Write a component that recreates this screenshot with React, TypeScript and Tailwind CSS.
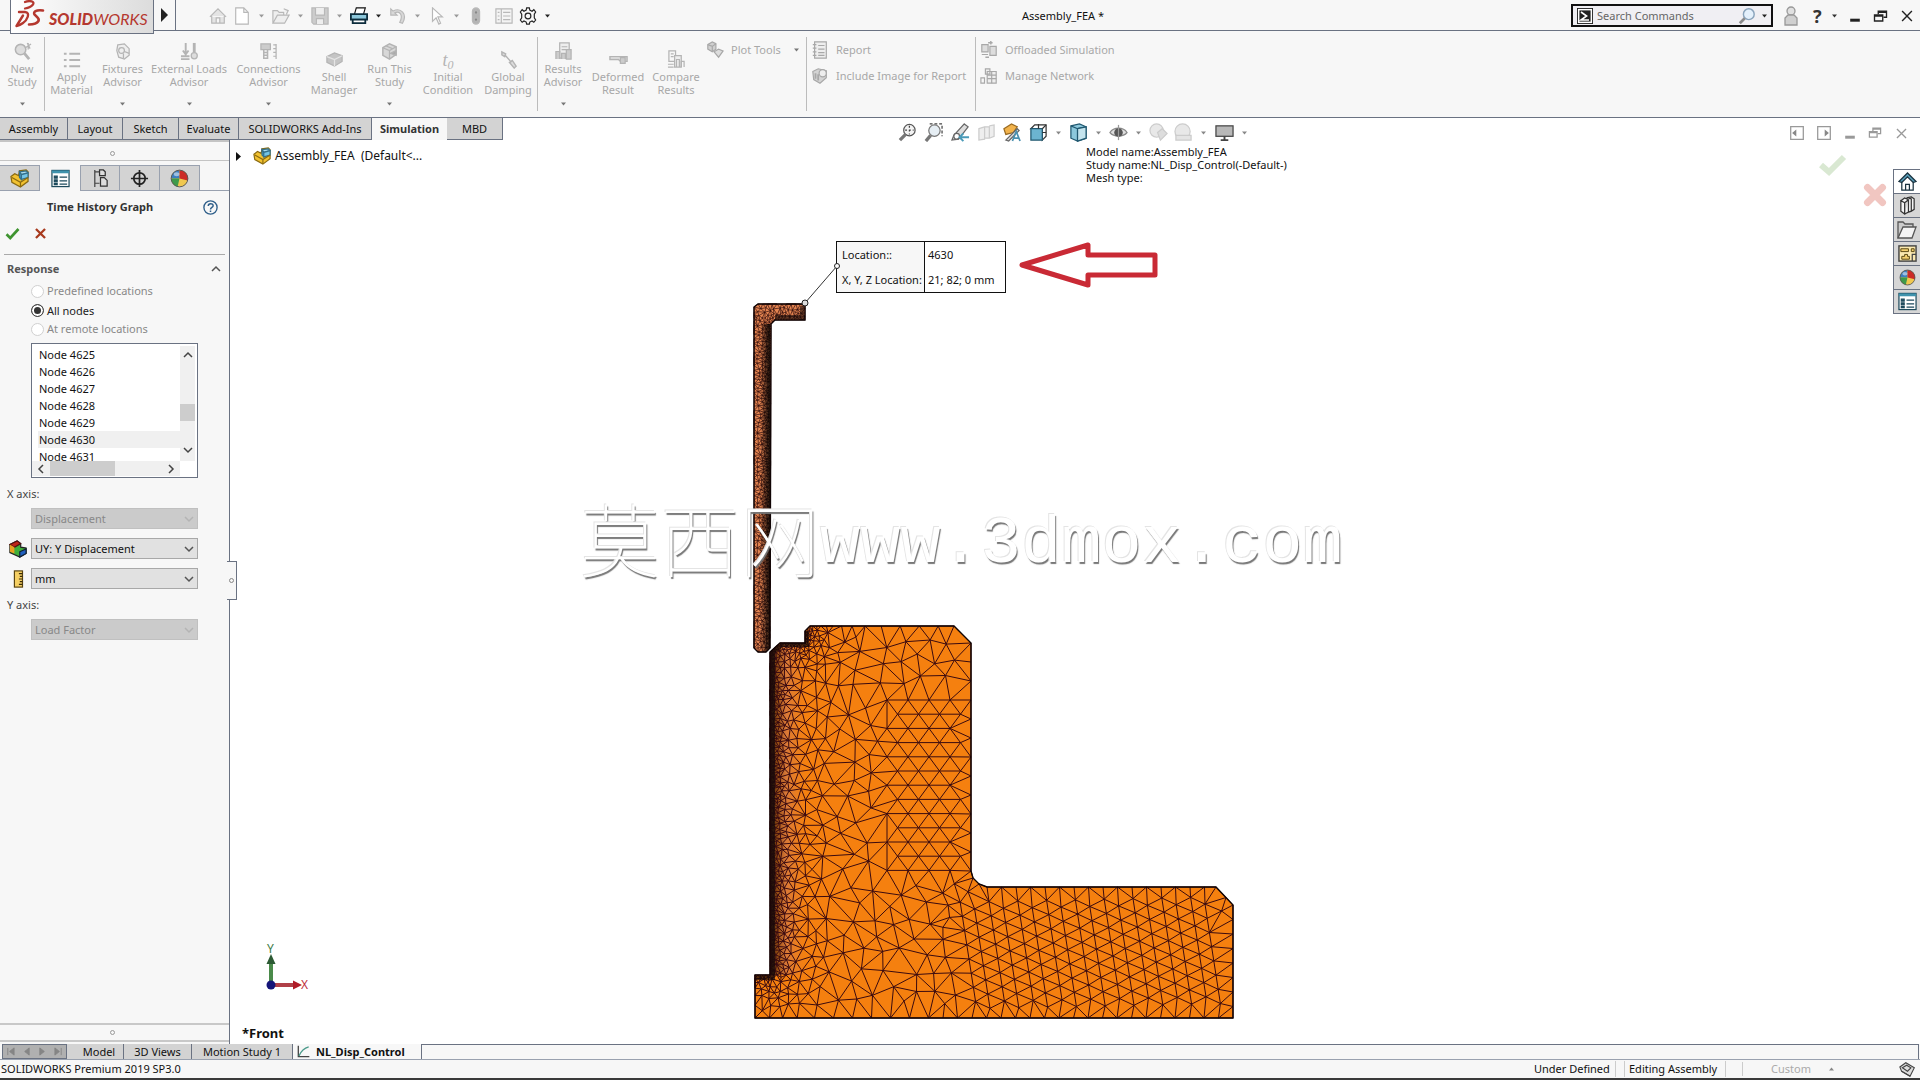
import React, { useMemo } from "react";

type Pt = [number, number];

/* ---------- finite element mesh ---------- */

function insidePoly(x: number, y: number, poly: Pt[]) {
  let hit = false;
  for (let i = 0, j = poly.length - 1; i < poly.length; j = i++) {
    const [xi, yi] = poly[i];
    const [xj, yj] = poly[j];
    if (yi > y !== yj > y && x < ((xj - xi) * (y - yi)) / (yj - yi) + xi) hit = !hit;
  }
  return hit;
}

function segDist(x: number, y: number, a: Pt, b: Pt) {
  const dx = b[0] - a[0];
  const dy = b[1] - a[1];
  const l = dx * dx + dy * dy;
  const t = l ? Math.max(0, Math.min(1, ((x - a[0]) * dx + (y - a[1]) * dy) / l)) : 0;
  return Math.hypot(x - a[0] - t * dx, y - a[1] - t * dy);
}

type Tri = { a: number; b: number; c: number; x: number; y: number; r: number };

function circum(p: Pt[], a: number, b: number, c: number): Tri {
  const [ax, ay] = p[a];
  const bx = p[b][0] - ax;
  const by = p[b][1] - ay;
  const cx = p[c][0] - ax;
  const cy = p[c][1] - ay;
  const d = 2 * (bx * cy - by * cx) || 1e-9;
  const ux = (cy * (bx * bx + by * by) - by * (cx * cx + cy * cy)) / d;
  const uy = (bx * (cx * cx + cy * cy) - cx * (bx * bx + by * by)) / d;
  return { a, b, c, x: ax + ux, y: ay + uy, r: ux * ux + uy * uy };
}

function delaunay(points: Pt[]): Tri[] {
  const n = points.length;
  const p = points.slice();
  p.push([-9000, -8000], [12000, -8500], [1000, 14000]);
  const order = points.map((_, i) => i).sort((i, j) => p[i][0] - p[j][0]);
  let open: Tri[] = [circum(p, n, n + 1, n + 2)];
  const closed: Tri[] = [];
  for (const i of order) {
    const [x, y] = p[i];
    const edges = new Map<string, [number, number] | null>();
    const add = (u: number, v: number) => {
      const k = u < v ? u + "_" + v : v + "_" + u;
      edges.set(k, edges.has(k) ? null : [u, v]);
    };
    const keep: Tri[] = [];
    for (const t of open) {
      const dx = x - t.x;
      if (dx > 0 && dx * dx > t.r) {
        closed.push(t);
        continue;
      }
      const dy = y - t.y;
      if (dx * dx + dy * dy > t.r) {
        keep.push(t);
        continue;
      }
      add(t.a, t.b);
      add(t.b, t.c);
      add(t.c, t.a);
    }
    open = keep;
    edges.forEach((e) => {
      if (e) open.push(circum(p, e[0], e[1], i));
    });
  }
  return closed.concat(open).filter((t) => t.a < n && t.b < n && t.c < n);
}

function buildMesh(poly: Pt[], size: (x: number, y: number) => number, seeds: Pt[], fine: number[][]) {
  let s = 12345;
  const rnd = () => {
    s = (s * 1103515245 + 12345) % 2147483648;
    return s / 2147483648;
  };
  const pts: Pt[] = [];
  const cells = new Map<number, number[]>();
  const key = (x: number, y: number) => Math.floor(x / 6) * 1000 + Math.floor(y / 6);
  const put = (x: number, y: number) => {
    const k = key(x, y);
    const c = cells.get(k);
    if (c) c.push(pts.length);
    else cells.set(k, [pts.length]);
    pts.push([x + (rnd() - 0.5) * 0.02, y + (rnd() - 0.5) * 0.02]);
  };
  const free = (x: number, y: number, d: number) => {
    const m = Math.ceil(d / 6);
    for (let i = -m; i <= m; i++)
      for (let j = -m; j <= m; j++) {
        const c = cells.get(key(x + i * 6, y + j * 6));
        if (c) for (const q of c) if (Math.hypot(pts[q][0] - x, pts[q][1] - y) < d) return false;
      }
    return true;
  };
  poly.forEach((a, i) => {
    const b = poly[(i + 1) % poly.length];
    const len = Math.hypot(b[0] - a[0], b[1] - a[1]);
    let t = 0;
    while (t < len - 1) {
      const x = a[0] + ((b[0] - a[0]) * t) / len;
      const y = a[1] + ((b[1] - a[1]) * t) / len;
      const h = size(x, y);
      if (t === 0 || len - t > h * 0.6) put(x, y);
      t += h;
    }
  });
  for (const [x, y] of seeds) if (insidePoly(x, y, poly) && free(x, y, 8)) put(x, y);
  for (const [x0, y0, x1, y1, count] of fine)
    for (let i = 0; i < count; i++) {
      const x = x0 + rnd() * (x1 - x0);
      const y = y0 + rnd() * (y1 - y0);
      if (insidePoly(x, y, poly) && free(x, y, size(x, y) * 0.82)) put(x, y);
    }
  const seen = new Set<number>();
  let d = "";
  for (const t of delaunay(pts)) {
    const mx = (pts[t.a][0] + pts[t.b][0] + pts[t.c][0]) / 3;
    const my = (pts[t.a][1] + pts[t.b][1] + pts[t.c][1]) / 3;
    if (!insidePoly(mx, my, poly)) continue;
    for (const [u, v] of [[t.a, t.b], [t.b, t.c], [t.c, t.a]]) {
      const k = Math.min(u, v) * 100000 + Math.max(u, v);
      if (seen.has(k)) continue;
      seen.add(k);
      d += `M${pts[u][0].toFixed(1)} ${pts[u][1].toFixed(1)}L${pts[v][0].toFixed(1)} ${pts[v][1].toFixed(1)}`;
    }
  }
  return d;
}

const BASE: Pt[] = [
  [755, 1018], [755, 975], [770, 975], [770, 652], [780, 643], [805, 643], [805, 631], [810, 626],
  [954, 626], [971, 643], [971, 871], [973, 878], [979, 884], [987, 887], [1216, 887], [1233, 905], [1233, 1018],
];
const ARM: Pt[] = [
  [754, 307], [758, 304], [805, 304], [805, 320], [775, 320], [771, 324], [770, 648], [766, 652], [758, 652], [754, 648],
];
const toPath = (p: Pt[]) => "M" + p.map((q) => q.join(" ")).join("L") + "Z";

function baseSize(x: number, y: number) {
  const d = Math.min(
    segDist(x, y, [770, 652], [770, 975]),
    segDist(x, y, [780, 643], [805, 643]),
    segDist(x, y, [805, 643], [808, 626]),
    segDist(x, y, [757, 975], [770, 975]),
  );
  const cap = x > 940 && y > 870 ? 14.5 : 19;
  return Math.min(cap, 2.4 + 0.24 * d);
}

function baseSeeds(): Pt[] {
  const out: Pt[] = [];
  for (let r = 0; r < 13; r++)
    for (let c = 0; c < 5; c++) {
      const x = 971 - c * 21 - (r % 2 ? 10.5 : 0);
      if (x < 970 && x > 882) out.push([x, 700 + r * 14.2]);
    }
  for (let c = 0; c < 22; c++)
    for (let r = 0; r < 12; r++) {
      const x = 958 + c * 14.4 + r * 2.2;
      const y = 888 + (c % 2 ? 7 : 0) + r * 14.2 - c * 0.3;
      if (y > 896 && y < 1010 && x < 1222) out.push([x, y]);
    }
  return out;
}

function Scene() {
  const base = useMemo(
    () => buildMesh(BASE, baseSize, baseSeeds(), [[755, 626, 830, 1018, 60000], [755, 626, 1233, 1018, 40000]]),
    [],
  );
  const arm = useMemo(
    () => buildMesh(ARM, (x, y) => 2.4 + 0.13 * Math.max(0, y < 322 ? 322 - y : 770 - x), [], [[753, 303, 806, 653, 50000]]),
    [],
  );
  return (
    <svg className="absolute inset-0 h-full w-full" viewBox="230 140 1690 904" preserveAspectRatio="xMinYMin meet" aria-label="Mesh plot">
      <defs>
        <linearGradient id="wall" gradientUnits="userSpaceOnUse" x1="770" x2="806" y1="0" y2="0">
          <stop offset="0" stopColor="#140a0a" stopOpacity="0.85" />
          <stop offset="0.2" stopColor="#2a1414" stopOpacity="0.5" />
          <stop offset="0.45" stopColor="#b8706a" stopOpacity="0.45" />
          <stop offset="1" stopColor="#c87850" stopOpacity="0" />
        </linearGradient>
        <linearGradient id="armShade" gradientUnits="userSpaceOnUse" x1="753" x2="771" y1="0" y2="0">
          <stop offset="0.4" stopColor="#000" stopOpacity="0" />
          <stop offset="0.8" stopColor="#000" stopOpacity="0.65" />
          <stop offset="1" stopColor="#000" stopOpacity="0.85" />
        </linearGradient>
      </defs>
      <path d={toPath(BASE)} fill="#f5800f" />
      <path d="M770 652L780 643H805V631L810 626H826L806 665V975H770Z" fill="url(#wall)" />
      <path d={base} fill="none" stroke="#3a0a10" strokeWidth="1" />
      <path d="M756 978H773V652L782 645H807V631" fill="none" stroke="#120808" strokeWidth="4" strokeOpacity="0.7" />
      <path d={toPath(BASE)} fill="none" stroke="#100404" strokeWidth="1.4" />
      <path d={toPath(ARM)} fill="#e48450" />
      <path d={arm} fill="none" stroke="#2c0a0a" strokeWidth="0.8" strokeOpacity="0.85" />
      <path d="M754 324H770V648L766 652H754Z" fill="url(#armShade)" />
      <path d="M775 317H805M802 306V320" stroke="#120808" strokeWidth="4" strokeOpacity="0.6" />
      <path d={toPath(ARM)} fill="none" stroke="#100404" strokeWidth="1.4" />
      <path d="M805 303L837 266" stroke="#333" strokeWidth="1" />
      <circle cx="805" cy="303" r="3" fill="#ddd" stroke="#222" />
      <path d="M1022 265L1088 245V255H1155V275H1088V285Z" fill="none" stroke="#c92a35" strokeWidth="5" strokeLinejoin="round" />
      <g>
        <path d="M271 983V962" stroke="#4a8a4a" strokeWidth="4" />
        <path d="M271 954L275.500 964H266.500Z" fill="#2c5a34" />
        <path d="M273 985H294" stroke="#b04048" strokeWidth="4" />
        <path d="M302 985L293 980.500V989.500Z" fill="#b01c28" />
        <circle cx="271" cy="985" r="4.500" fill="#141478" />
        <text x="267" y="953" fontFamily="Noto Sans" fontSize="12" fill="#3c7a44">Y</text>
        <text x="301" y="989" fontFamily="Noto Sans" fontSize="12" fill="#c03040">X</text>
      </g>
    </svg>
  );
}

/* ---------- icons ---------- */

function Ico({ s = 20, children, className = "" }: { s?: number; children: React.ReactNode; className?: string }) {
  return (
    <svg width={s} height={s} viewBox="0 0 20 20" fill="none" stroke="currentColor" strokeWidth="1.3" className={"shrink-0 " + className} aria-hidden="true">
      {children}
    </svg>
  );
}
const Caret = ({ className = "" }: { className?: string }) => (
  <svg width="5" height="4" viewBox="0 0 5 4" className={"shrink-0 " + className} aria-hidden="true">
    <path d="M0 0.500H5L2.500 3.500Z" fill="currentColor" />
  </svg>
);

const PartIcon = ({ s = 18 }: { s?: number }) => (
  <Ico s={s}>
    <path d="M1 8L5 5L9 7L10 2L17 1L19 3V13L11 19L2 14Z" fill="#f2c230" stroke="#8a6a10" />
    <path d="M10 3L17 2L19 4L12 6Z" fill="#a8dcf0" stroke="#33708c" />
    <path d="M10 3V9L12 11V6Z" fill="#4ea4c8" stroke="#33708c" />
    <path d="M12 6L19 4V9L12 11Z" fill="#74c4e4" stroke="#33708c" />
    <path d="M2 9L11 14L19 9M11 14V19" stroke="#8a6a10" />
  </Ico>
);
const SheetIcon = ({ s = 19 }: { s?: number }) => (
  <Ico s={s}>
    <rect x="1" y="1.500" width="18" height="17" fill="#fff" stroke="#1d4a5c" />
    <path d="M1 3H19" stroke="#3f93ad" strokeWidth="3" />
    <path d="M3.500 7.500H6.500V9.500H3.500ZM3.500 11.500H6.500V13.500H3.500ZM3.500 15.500H6.500V16.500H3.500Z" fill="#1d4a5c" stroke="#1d4a5c" />
    <path d="M9 8.500H17M9 12.500H17M9 16H17" stroke="#1d4a5c" />
  </Ico>
);
const BallIcon = ({ s = 18 }: { s?: number }) => (
  <Ico s={s}>
    <circle cx="10" cy="10" r="8.800" fill="#f0c850" stroke="none" />
    <path d="M10 10L1.200 10A8.800 8.800 0 0 1 10 1.200Z" fill="#3d7fc0" stroke="none" />
    <path d="M10 10L10 1.200A8.800 8.800 0 0 1 18.600 12Z" fill="#cc2b26" stroke="none" />
    <path d="M10 10L1.200 10A8.800 8.800 0 0 0 8 18.600Z" fill="#3f9a4a" stroke="none" />
    <circle cx="10" cy="10" r="8.800" stroke="#555" strokeWidth="1" />
    <ellipse cx="7" cy="5.500" rx="3" ry="2" fill="#fff" fillOpacity="0.5" stroke="none" />
  </Ico>
);
const Restore = ({ s = 15 }: { s?: number }) => (
  <Ico s={s}>
    <path d="M7 7V3H18V11H14M7 4.500H18" strokeWidth="1.800" />
    <path d="M2 8H13V16H2ZM2 9.500H13" strokeWidth="1.800" />
  </Ico>
);
const Cross = ({ s = 14 }: { s?: number }) => (
  <Ico s={s}><path d="M3 3L17 17M17 3L3 17" strokeWidth="2" /></Ico>
);
const Minimize = ({ s = 12 }: { s?: number }) => (
  <Ico s={s}><path d="M2 17H18" strokeWidth="5" /></Ico>
);

const glyph: Record<string, React.ReactNode> = {
  study: <><circle cx="8" cy="8" r="5.500" fill="#ddd" strokeWidth="1.600" /><path d="M12 12L17 18" strokeWidth="3" /><path d="M15 1L18 7M19 2L13 6M16 1V8" /></>,
  material: <path d="M1 3H4M1 10H4M1 17H4M7 3H19M7 10H19M7 17H19" strokeWidth="2.200" />,
  fixture: <><path d="M5 3L12 2L17 7V14L12 18L6 16L4 9Z" fill="#eee" /><circle cx="9" cy="9" r="3" /><path d="M12 10L17 12M11 12V17" /></>,
  load: <><path d="M6 1V12M3 9L6 13L9 9M1 15H10M1 18H10" strokeWidth="2" /><path d="M15 1V11" strokeWidth="3" /><circle cx="15" cy="14.500" r="3.200" fill="#ddd" /></>,
  connect: <><path d="M2 2H12V8H2Z" fill="#ccc" /><path d="M5 8V17H9V8M5 11H9M5 14H9" strokeWidth="1.600" /><path d="M18 2V18M15 3H18M15 7H18M15 11H18M15 15H18" /></>,
  shell: <><path d="M2 7L10 3L18 6V12L10 17L2 13Z" fill="#c4c4c4" /><path d="M2 7L10 10L18 6M10 10V17" stroke="#e4e4e4" /></>,
  run: <><path d="M3 6L10 2L17 5V13L10 18L3 14Z" fill="#d8d8d8" strokeWidth="1.600" /><path d="M3 6L10 9L17 5M10 9V18M6 4L13 7" /><path d="M11 12L17 9V14Z" fill="#aaa" /></>,
  damping: <path d="M3 2L7 4L6 7L3 5ZM7 6L13 13M11 13L14 11L18 17L16 19Z" fill="#ddd" strokeWidth="1.500" />,
  results: <><path d="M6 1H16V17H6Z" fill="#eee" /><path d="M8 5H14M8 8H14" /><path d="M2 18V10H6V18M8 18V12H12V18M13 18V8H18V18Z" fill="#ccc" /></>,
  deformed: <><path d="M1 7H19V12H12L10 10H1Z" fill="#e4e4e4" strokeWidth="1.500" /><path d="M12 8H17V14H12Z" fill="#ccc" /></>,
  compare: <><path d="M2 1H9V12H2ZM4 4H7M4 7H7" /><path d="M8 6H15V18H8Z" fill="#eee" /><path d="M10 18V10H13V18M15 18V12H18V18M1 15H7M1 18H7" /></>,
  plot: <><path d="M2 4L7 1L11 3V9L7 12L2 9Z" fill="#d0d0d0" /><path d="M2 4L7 6L11 3M7 6V12" /><path d="M9 12L14 9L19 11L14 18Z" fill="#ddd" /></>,
  report: <><path d="M4 1H17V19H4Z" fill="#eee" /><path d="M2 4H6M2 8H6M2 12H6M2 16H6M8 5H15M8 9H15M8 13H15M8 16H15" /></>,
  image: <><path d="M2 5L8 2L17 4V12L10 18L3 14Z" fill="#d4d4d4" /><circle cx="13" cy="7" r="4" fill="#eee" /><path d="M5 7V13M8 8V15" strokeWidth="2" /></>,
  offload: <><path d="M2 4H9V12H2ZM2 15H9M11 6H18V16H11Z" fill="#ddd" /><path d="M9 2H14M12 0V4M6 18H10" strokeWidth="1.600" /></>,
  network: <><path d="M6 2H11V8H6ZM8 5H18V18H8Z" fill="#eee" /><path d="M8 9H18M8 13H18M13 5V18M1 12H5V18H1Z" /></>,
};

/* ---------- title bar ---------- */

function Logo() {
  return (
    <div className="z-10 flex h-[34px] w-36 items-start border border-t-0 border-gray-500 bg-linear-to-r from-white to-[#dcdcdc] pl-1">
      <svg width="30" height="30" viewBox="0 0 30 30" fill="none" stroke="#b5382f" strokeLinecap="round" strokeLinejoin="round" aria-hidden="true">
        <path d="M10 2C15 0 20 1.500 18 4.500C16.500 6.500 13 8 10 8.500" strokeWidth="2.200" />
        <path d="M4 12H10C16 12.500 12 20.500 8 23C6 24.500 4 25.500 1.500 26L8 15.500" strokeWidth="2.400" />
        <path d="M28 10.500C21 9.500 18 12 19.500 14.500C21 16.500 25 18 23.500 21C22 23.500 18 24.500 14 24.500" strokeWidth="2.600" />
      </svg>
      <span className="mt-[7px] ml-1 text-base leading-6 text-[#b5382f] italic [font-family:Lato,sans-serif]">
        <b className="font-black">SOLID</b>WORKS
      </span>
    </div>
  );
}

const quick: { label: string; icon: React.ReactNode; caret?: boolean; on?: boolean; w: string }[] = [
  { label: "Home", w: "w-6", icon: <><path d="M1 11L10 2L19 11M3 10V18H17V10M8 18V12H12V18" fill="#e4e4e4" /></> },
  { label: "New", w: "w-[39px]", caret: true, icon: <path d="M3 1H12L17 6V19H3ZM12 1V6H17" fill="#fff" /> },
  { label: "Open", w: "w-[39px]", caret: true, icon: <path d="M1 18V4H6L8 6H13V9M1 18L6 9H19L14 18ZM13 2L18 4L16 8" fill="#eee" /> },
  { label: "Save", w: "w-[39px]", caret: true, icon: <><path d="M1 1H19V19H3L1 17Z" fill="#ccc" /><path d="M5 1V9H15V1M6 19V13H14V19" fill="#eee" /></> },
  { label: "Print", w: "w-[39px]", caret: true, on: true, icon: <><path d="M5 8L7 1H17L15 8" fill="#fff" stroke="#111" /><path d="M1 8H19V14H1Z" fill="#8cc8dc" stroke="#0c2c3c" strokeWidth="2" /><path d="M3 14H17V18H3Z" fill="#fff" stroke="#0c2c3c" strokeWidth="2" /></> },
  { label: "Undo", w: "w-[39px]", caret: true, icon: <path d="M2 2V9H9L6.500 6.500C12 4 16 9 12 17L15 18C21 8 13 0 4.500 4.500Z" fill="#d8d8d8" /> },
  { label: "Select", w: "w-[39px]", caret: true, icon: <path d="M5 1V16L9 12L12 19L14 18L11 11H16Z" fill="#fff" /> },
  { label: "Rebuild", w: "w-7", icon: <><rect x="6" y="1" width="8" height="18" rx="4" fill="#b4b4b4" /><circle cx="10" cy="6" r="2" fill="#888" /><circle cx="10" cy="14" r="2" fill="#888" /></> },
  { label: "File Properties", w: "w-6", icon: <><path d="M1 2H19V18H1ZM7 2V18" fill="#f4f4f4" /><path d="M3 6H5M3 10H5M3 14H5M9 6H17M9 10H17M9 14H17" /></> },
  { label: "Options", w: "w-[36px]", caret: true, on: true, icon: <><circle cx="10" cy="10" r="3.200" /><path d="M8.500 1H11.500L12 3.500L14.500 4.700L16.500 3L18.500 5.500L17 8V12L18.500 14.500L16.500 17L14.500 15.500L12 16.700L11.500 19H8.500L8 16.700L5.500 15.500L3.500 17L1.500 14.500L3 12V8L1.500 5.500L3.500 3L5.500 4.700L8 3.500Z" /></> },
];

function TitleBar() {
  return (
    <header className="flex h-[31px] shrink-0 items-start border-b border-gray-500 bg-[#f7f7f7] pl-2.5">
      <Logo />
      <button aria-label="Expand menu" className="flex h-[30px] w-[22px] items-center justify-center border-r border-gray-500">
        <svg width="7" height="14" viewBox="0 0 7 14"><path d="M0 0L7 7L0 14Z" fill="#222" /></svg>
      </button>
      <div className="ml-[33px] flex h-8 items-center">
        {quick.map((q) => (
          <button key={q.label} aria-label={q.label} className={q.w + " flex items-center gap-2 " + (q.on ? "text-[#222]" : "text-[#b8b8b8]")}>
            <Ico s={18}>{q.icon}</Ico>
            {q.caret && <Caret className={q.on ? "" : "text-[#999]"} />}
          </button>
        ))}
      </div>
      <div className="flex h-8 flex-1 items-center justify-center text-[#111]">Assembly_FEA *</div>
      <div className="mt-1 flex h-[23px] w-[202px] items-center border-2 border-[#111] bg-[#f0eff3] pl-1">
        <Ico s={16}><rect x="0.500" y="0.500" width="19" height="19" fill="#fff" stroke="#222" /><rect x="3" y="3" width="14" height="14" fill="#222" stroke="none" /><path d="M5 5L12 10L5 15H15" stroke="#fff" strokeWidth="2" /></Ico>
        <input aria-label="Search Commands" placeholder="Search Commands" className="ml-1 w-0 flex-1 bg-transparent placeholder:text-[#666] outline-none" />
        <Ico s={18} className="mr-1.5"><circle cx="12" cy="8" r="6" fill="#e4f0fb" stroke="#8aa4bc" strokeWidth="1.600" /><path d="M7.500 12.500L2 18" stroke="#8a8a8a" strokeWidth="3" /></Ico>
        <Caret className="mr-1 text-[#222]" />
      </div>
      <div className="flex h-8 w-[147px] shrink-0 items-center justify-between pr-1.5 pl-2 text-[#222]">
        <button aria-label="Log in"><Ico s={20} className="text-[#999]"><circle cx="10" cy="5" r="4" fill="#e0e0e0" /><path d="M4 19V12L7 9H13L16 12V19Z" fill="#d0d0d0" /></Ico></button>
        <button aria-label="Help" className="flex items-center gap-2.5 text-lg font-bold text-[#333]">?<Caret /></button>
        <button aria-label="Minimize"><Minimize /></button>
        <button aria-label="Restore"><Restore /></button>
        <button aria-label="Close"><Cross /></button>
      </div>
    </header>
  );
}

/* ---------- ribbon ---------- */

function Big({ w, icon, l, low, caret }: { w: string; icon: React.ReactNode; l: [string, string]; low?: boolean; caret?: boolean }) {
  return (
    <button disabled className={w + " flex shrink-0 flex-col items-center whitespace-nowrap text-[#a8a8a8] " + (low ? "pt-[18px]" : "pt-2.5")}>
      <span className="flex h-[21px] items-center text-[#b4b4b4]">{icon}</span>
      <span className="leading-[13px]">{l[0]}<br />{l[1]}</span>
      {caret && <Caret className="mt-3.5 text-[#777]" />}
    </button>
  );
}
const Sep = () => <div className="my-1.5 w-px shrink-0 bg-[#bcbcbc]" />;
function Small({ icon, children, caret }: { icon: React.ReactNode; children: string; caret?: boolean }) {
  return (
    <button disabled className="flex h-[26px] items-center gap-[7px] whitespace-nowrap text-[#a8a8a8]">
      <Ico s={18}>{icon}</Ico>{children}{caret && <Caret className="ml-1.5 text-[#777]" />}
    </button>
  );
}

function Ribbon() {
  const g = (k: string, s = 19) => <Ico s={s}>{glyph[k]}</Ico>;
  return (
    <section aria-label="Simulation commands" className="flex h-[87px] shrink-0 border-b border-gray-500 bg-[#f7f7f7]">
      <Big w="w-[44px]" icon={g("study")} l={["New", "Study"]} caret />
      <Sep />
      <Big w="w-[53px]" icon={g("material", 18)} l={["Apply", "Material"]} low />
      <Big w="w-[49px]" icon={g("fixture")} l={["Fixtures", "Advisor"]} caret />
      <Big w="w-[84px]" icon={g("load")} l={["External Loads", "Advisor"]} caret />
      <Big w="w-[75px]" icon={g("connect")} l={["Connections", "Advisor"]} caret />
      <Big w="w-[56px]" icon={g("shell")} l={["Shell", "Manager"]} low />
      <Big w="w-[55px]" icon={g("run")} l={["Run This", "Study"]} caret />
      <Big w="w-[62px]" icon={<i className="text-lg leading-5 [font-family:'Liberation_Serif',serif]">t<sub className="text-xs">0</sub></i>} l={["Initial", "Condition"]} low />
      <Big w="w-[58px]" icon={g("damping")} l={["Global", "Damping"]} low />
      <Sep />
      <Big w="w-[50px]" icon={g("results")} l={["Results", "Advisor"]} caret />
      <Big w="w-[60px]" icon={g("deformed")} l={["Deformed", "Result"]} low />
      <Big w="w-[56px]" icon={g("compare")} l={["Compare", "Results"]} low />
      <div className="w-[102px] pt-1.5 pl-0.5"><Small icon={glyph.plot} caret>Plot Tools</Small></div>
      <Sep />
      <div className="w-[168px] pt-1.5 pl-1"><Small icon={glyph.report}>Report</Small><Small icon={glyph.image}>Include Image for Report</Small></div>
      <Sep />
      <div className="pt-1.5 pl-1"><Small icon={glyph.offload}>Offloaded Simulation</Small><Small icon={glyph.network}>Manage Network</Small></div>
    </section>
  );
}

/* ---------- tab row with view toolbar ---------- */

const tabs: [string, string][] = [
  ["Assembly", "w-[68px]"], ["Layout", "w-[55px]"], ["Sketch", "w-[56px]"], ["Evaluate", "w-[60px]"],
  ["SOLIDWORKS Add-Ins", "w-[133px]"], ["Simulation", "w-[75px]"], ["MBD", "w-[56px]"],
];

const view: { label: string; w: string; caret?: boolean; icon: React.ReactNode }[] = [
  { label: "Zoom to Fit", w: "w-[26px]", icon: <><circle cx="12" cy="7.500" r="6" fill="#f4f4f4" stroke="#555" /><path d="M12 3V12M7.500 7.500H16.500" stroke="#444" strokeDasharray="2 2" /><path d="M8 12L2 18" stroke="#777" strokeWidth="3.500" /></> },
  { label: "Zoom to Area", w: "w-[27px]", icon: <><path d="M6 1H19V14" stroke="#444" strokeDasharray="3 2" /><circle cx="11" cy="8" r="6" fill="#e6eef4" stroke="#777" /><path d="M7 13L2 19" stroke="#777" strokeWidth="3.500" /></> },
  { label: "Previous View", w: "w-[26px]", icon: <><path d="M14 1L18 4L8 17L1 18L3 13Z" fill="#ddd" stroke="#666" /><circle cx="6" cy="14" r="3" fill="#fff" stroke="#666" /><path d="M10 15H19M13 11L9 15L13 19" stroke="#4a9ab8" strokeWidth="2" /></> },
  { label: "Section View", w: "w-[25px]", icon: <path d="M2 6L8 4V17L2 18ZM8 4H13V16H8M13 3L18 2V14L13 16" fill="#eee" stroke="#ccc" /> },
  { label: "Annotation Views", w: "w-[27px]", icon: <><path d="M2 6L10 1L16 4L12 10L4 12Z" fill="#f2b34c" stroke="#9a6a20" /><path d="M4 18L16 6L18 8L7 19Z" fill="#ddd" stroke="#666" /><path d="M11 19L15 9L19 19M12 16H18" stroke="#4a90b0" strokeWidth="1.800" /></> },
  { label: "View Orientation", w: "w-[40px]", caret: true, icon: <><path d="M6 2H18V14L14 18V6H2L6 2Z" fill="#fff" stroke="#333" /><path d="M2 6H14V18H2Z" fill="#6cb4d0" stroke="#205870" /><path d="M14 6L18 2M10 1V6M14 10H18" stroke="#333" /></> },
  { label: "Display Style", w: "w-[40px]", caret: true, icon: <><path d="M2 3L11 1L18 4V16L9 19L2 16Z" fill="#8cc8dc" stroke="#205870" /><path d="M2 3L9 6L18 4M9 6V19" stroke="#205870" /><path d="M9 6L18 4V16L9 19Z" fill="#c4e4ee" stroke="#205870" /></> },
  { label: "Hide/Show Items", w: "w-[40px]", caret: true, icon: <><path d="M1 10C5 4 15 4 19 10C15 15 5 15 1 10Z" fill="#ddd" stroke="#888" /><circle cx="10" cy="10" r="4.500" fill="#555" stroke="none" /><path d="M10 2V18" stroke="#999" /></> },
  { label: "Edit Appearance", w: "w-[25px]", icon: <><circle cx="8" cy="8" r="7" fill="#e8e8e8" stroke="#ccc" /><path d="M9 10L14 6L19 11L12 18Z" fill="#ddd" stroke="#ccc" /></> },
  { label: "Apply Scene", w: "w-[41px]", caret: true, icon: <><circle cx="9" cy="9" r="8" fill="#e8e8e8" stroke="#ccc" /><path d="M2 13H18V18H2Z" fill="#e4e4e4" stroke="#ccc" /></> },
  { label: "View Settings", w: "w-[40px]", caret: true, icon: <><rect x="1" y="3" width="18" height="11" fill="#b8b8b8" stroke="#444" /><path d="M10 14V17M6 18H14" stroke="#444" strokeWidth="2" /></> },
];

function TabRow() {
  return (
    <div className="z-10 flex h-[22px] shrink-0 bg-white">
      <nav role="tablist" aria-label="CommandManager" className="flex">
        {tabs.map(([t, w]) => {
          const on = t === "Simulation";
          return (
            <button key={t} role="tab" aria-selected={on} className={w + " whitespace-nowrap " + (on ? "bg-[#f7f7f7] font-bold text-[#333]" : "border-r border-b border-gray-500 bg-[#d3d3d3] text-[#111]")}>
              {t}
            </button>
          );
        })}
      </nav>
      <div role="toolbar" aria-label="View" className="ml-[395px] flex h-[29px] items-center">
        {view.map((v) => (
          <button key={v.label} aria-label={v.label} className={v.w + " flex shrink-0 items-center gap-2"}>
            <Ico s={19}>{v.icon}</Ico>
            {v.caret && <Caret className="text-[#888]" />}
          </button>
        ))}
      </div>
      <div className="mr-3 ml-auto flex h-[30px] w-[118px] items-center justify-between text-[#999]">
        <button aria-label="Collapse left"><Ico s={14}><path d="M1 1H19V19H1Z" strokeWidth="1.800" /><path d="M9 5V15L3 10Z" fill="#888" stroke="none" /></Ico></button>
        <button aria-label="Collapse right"><Ico s={14}><path d="M1 1H19V19H1Z" strokeWidth="1.800" /><path d="M11 5V15L17 10Z" fill="#888" stroke="none" /></Ico></button>
        <button aria-label="Minimize document"><Minimize /></button>
        <button aria-label="Restore document"><Restore s={14} /></button>
        <button aria-label="Close document"><Cross s={13} /></button>
      </div>
    </div>
  );
}

/* ---------- property manager ---------- */

const Dot = () => <span className="mr-1 h-[5px] w-[5px] rounded-full border border-[#999]" />;
const Chevron = ({ d, className = "" }: { d: string; className?: string }) => (
  <svg width="10" height="10" viewBox="0 0 10 10" fill="none" stroke="currentColor" strokeWidth="1.500" className={"shrink-0 " + className} aria-hidden="true"><path d={d} /></svg>
);
const UP = "M1 7L5 3L9 7", DOWN = "M1 3L5 7L9 3", LEFT = "M7 1L3 5L7 9", RIGHT = "M3 1L7 5L3 9";

function Radio({ label, on, off, h }: { label: string; on?: boolean; off?: boolean; h: string }) {
  return (
    <label className={h + " flex items-center gap-[3px] " + (off ? "text-[#888]" : "text-[#222]")}>
      <input type="radio" name="nodes" defaultChecked={on} disabled={off} className="m-0 h-[13px] w-[13px] appearance-none rounded-full border border-[#444] bg-white checked:bg-[#333] checked:shadow-[inset_0_0_0_2px_white] disabled:border-[#d0d0d0]" />
      {label}
    </label>
  );
}

function Drop({ label, value, disabled, icon }: { label: string; value: string; disabled?: boolean; icon?: React.ReactNode }) {
  return (
    <label className="relative flex items-center">
      <span className="flex w-[31px] justify-center pl-1">{icon}</span>
      <select aria-label={label} disabled={disabled} className={"h-[21px] w-[167px] appearance-none border pl-[3px] opacity-100 " + (disabled ? "border-[#c0c0c0] bg-[#cbcbcb] text-[#888]" : "border-[#a8a8a8] bg-[#e1e1e1] text-[#111]")}>
        <option>{value}</option>
      </select>
      <Chevron d={DOWN} className={"pointer-events-none absolute left-[184px] " + (disabled ? "text-[#b4b4b4]" : "text-[#555]")} />
    </label>
  );
}

function Panel() {
  const nodes = [4625, 4626, 4627, 4628, 4629, 4630, 4631];
  const tab = "flex h-[26px] w-10 items-center justify-center ";
  const off = "border-t border-r border-b border-gray-400 bg-[#d3d3d3]";
  return (
    <aside className="relative flex w-[230px] shrink-0 flex-col border-r border-gray-500 bg-[#f7f7f7]">
      <div className="flex h-[21px] items-center justify-center border-t-2 border-b border-[#c4c4c4] pt-1"><Dot /></div>
      <div className="mt-1 flex">
        <button aria-label="FeatureManager" className={tab + off}><PartIcon s={19} /></button>
        <button aria-label="PropertyManager" className={tab}><SheetIcon /></button>
        <button aria-label="ConfigurationManager" className={tab + off + " border-l"}>
          <Ico s={19}><path d="M4 1V19M4 3H9M4 15H9" stroke="#444" /><path d="M9 1H13L15 3V7H9ZM10 9H14L17 12V18H10Z" fill="#ddd" stroke="#333" /></Ico>
        </button>
        <button aria-label="DimXpertManager" className={tab + off}>
          <Ico s={19}><circle cx="10" cy="10" r="6" stroke="#222" strokeWidth="1.800" /><path d="M10 1V19M1 10H19" stroke="#222" strokeWidth="1.800" /></Ico>
        </button>
        <button aria-label="DisplayManager" className={tab + off}><BallIcon s={19} /></button>
        <span className="flex-1 border-b border-gray-400" />
      </div>
      <div className="mt-1.5 flex h-5 items-center pl-[47px]">
        <h2 className="w-[156px] font-bold text-[#333]">Time History Graph</h2>
        <button aria-label="Help"><Ico s={15}><circle cx="10" cy="10" r="8.800" stroke="#2f5f8a" strokeWidth="1.800" /><path d="M7 8C7 4 13.500 4 13.500 7.500C13.500 10 10 9.500 10 12.500M10 14V16" stroke="#2f5f8a" strokeWidth="2" /></Ico></button>
      </div>
      <div className="mt-[7px] flex h-[18px] items-center gap-3.5 pl-[5px]">
        <button aria-label="OK"><Ico s={15}><path d="M2 11L7 16L18 4" stroke="#3f9430" strokeWidth="3.500" /></Ico></button>
        <button aria-label="Cancel"><Ico s={13}><path d="M3 3L17 17M17 3L3 17" stroke="#a83a1e" strokeWidth="3.500" /></Ico></button>
      </div>
      <div className="mx-1 mt-3 border-t border-[#aaa]" />
      <div className="mt-1.5 flex h-4 items-center justify-between pr-2 pl-[7px] font-bold text-[#555]">
        Response<button aria-label="Collapse"><Chevron d={UP} /></button>
      </div>
      <fieldset className="mt-1 pl-[31px]">
        <Radio h="h-5" label="Predefined locations" off />
        <Radio h="h-[19px]" label="All nodes" on />
        <Radio h="h-[18px]" label="At remote locations" off />
      </fieldset>
      <div className="mt-[5px] ml-[31px] flex h-[135px] w-[167px] flex-col border border-gray-500 bg-white pt-0.5 pr-0.5">
        <div className="flex h-[115px]">
          <ul role="listbox" aria-label="Nodes" className="ml-1.5 flex-1 overflow-hidden text-[#111]">
            {nodes.map((n) => (
              <li key={n} role="option" aria-selected={n === 4630} className={"h-[17px] pl-px leading-[17px] " + (n === 4630 ? "bg-[#f0f0f0]" : "")}>Node {n}</li>
            ))}
          </ul>
          <div className="flex w-[15px] flex-col items-center bg-[#f0f0f0] py-0.5 text-[#444]">
            <Chevron d={UP} className="mt-0.5" />
            <span className="mt-11 h-[17px] w-full bg-[#cdcdcd]" />
            <Chevron d={DOWN} className="mt-auto mb-1" />
          </div>
        </div>
        <div className="mr-[15px] flex h-[15px] items-center bg-[#f0f0f0] pr-1 pl-1 text-[#444]">
          <Chevron d={LEFT} /><span className="ml-1 h-full w-[65px] bg-[#cdcdcd]" /><Chevron d={RIGHT} className="ml-auto" />
        </div>
      </div>
      <p className="mt-1.5 h-[22px] pl-[7px] leading-5 text-[#444]">X axis:</p>
      <div className="mt-0.5 flex flex-col gap-[9px]">
        <Drop label="X axis quantity" value="Displacement" disabled />
        <Drop label="Component" value="UY: Y Displacement" icon={
          <Ico s={18}><path d="M1 5L9 1L13 4V8L19 9V15L12 19L1 14Z" fill="#3fae3a" stroke="#222" /><path d="M1 5L9 1L13 4L6 8Z" fill="#c02418" stroke="#511" /><path d="M1 5L6 8V15L1 13Z" fill="#e8a020" stroke="none" /><path d="M12 13L19 10V15L12 19Z" fill="#2060c0" stroke="#123" /></Ico>
        } />
        <Drop label="Units" value="mm" icon={
          <Ico s={18}><rect x="6" y="1" width="9" height="18" fill="#f6d064" stroke="#5a4410" /><path d="M11 4H15M12 7H15M11 10H15M12 13H15M11 16H15" stroke="#3a2c08" /></Ico>
        } />
      </div>
      <p className="mt-1.5 mb-1 h-5 pl-[7px] leading-5 text-[#444]">Y axis:</p>
      <Drop label="Y axis quantity" value="Load Factor" disabled />
      <div className="mt-auto mb-0.5 flex h-[19px] items-center justify-center border-t-2 border-b-2 border-[#c8c8c8]"><Dot /></div>
      <button aria-label="Hide panel" className="absolute top-[421px] -right-2 z-10 flex h-[39px] w-2.5 items-center justify-center border border-l-0 border-gray-500 bg-[#f7f7f7]">
        <span className="h-[5px] w-[5px] rounded-full border border-[#888]" />
      </button>
    </aside>
  );
}

/* ---------- graphics area ---------- */

function TaskPane() {
  const b = "flex h-6 w-[26px] items-center justify-center border-b border-gray-500 ";
  return (
    <nav aria-label="Task pane" className="absolute top-[29px] right-0 border-t border-l border-gray-500 bg-[#d6d6d6]">
      <button aria-label="Resources" className={b + "bg-white"}><Ico s={19}><path d="M1 10L10 1L19 10L16 11L10 5L4 11Z" fill="#5aa0bc" stroke="#1b3340" /><path d="M4 11V19H16V11M8 19V13H12V19" stroke="#1b3340" /></Ico></button>
      <button aria-label="Design Library" className={b}><Ico s={19}><path d="M3 5L7 7V19L3 16ZM7 7L11 4L7 2L3 5M7 19L11 17V4M11 17L14 16V3L11 2M14 16L17 14V3L14 1L9 2" fill="#f4f4f4" stroke="#333" /></Ico></button>
      <button aria-label="File Explorer" className={b}><Ico s={20}><path d="M1 18V2H6L8 4H16V7" fill="#ccc" stroke="#555" /><path d="M1 18L6 7H19L15 18Z" fill="#f4f4f4" stroke="#555" /></Ico></button>
      <button aria-label="View Palette" className={b}><Ico s={19}><rect x="1" y="2" width="18" height="16" fill="#fbe9b0" stroke="#444" strokeWidth="1.500" /><path d="M3 5H11V8H3ZM14 5H17V8H14ZM4 16V13H7V11H10V13H12V16Z" stroke="#554410" fill="#f4d070" strokeWidth="1" /><path d="M15 18V11H19" stroke="#444" /></Ico></button>
      <button aria-label="Appearances" className={b}><BallIcon s={17} /></button>
      <button aria-label="Custom Properties" className={b}><SheetIcon s={19} /></button>
    </nav>
  );
}

function Viewport() {
  return (
    <main className="relative min-w-0 flex-1 overflow-hidden bg-white">
      <Scene />
      <div className="relative flex items-center pt-[7px] pl-1.5 text-xs text-[#111]">
        <svg width="5" height="9" viewBox="0 0 5 9"><path d="M0 0L5 4.500L0 9Z" fill="#111" /></svg>
        <span className="mr-1 ml-3"><PartIcon s={18} /></span>
        <span className="whitespace-pre">Assembly_FEA  (Default&lt;...</span>
      </div>
      <div className="absolute top-[5px] left-[856px] leading-[13px] text-[#111]">
        Model name:Assembly_FEA<br />Study name:NL_Disp_Control(-Default-)<br />Mesh type:
      </div>
      <table className="absolute top-[101px] left-[606px] w-[170px] border-collapse border border-[#111] bg-white leading-[25px] text-[#111]">
        <tbody>
          <tr><td className="w-[88px] border-r border-[#111] bg-[#f7f7f7] pl-[5px] whitespace-nowrap">Location::</td><td className="pl-[3px]">4630</td></tr>
          <tr><td className="border-r border-[#111] bg-[#f7f7f7] pl-[5px] whitespace-nowrap">X, Y, Z Location:</td><td className="pl-[3px] whitespace-nowrap">21; 82; 0 mm</td></tr>
        </tbody>
      </table>
      <span className="absolute top-[123px] left-[604px] h-[6px] w-[6px] rounded-full border border-[#222] bg-white" />
      <div className="absolute top-[341px] left-[350px] flex items-start leading-[110px] whitespace-nowrap text-white [text-shadow:-1px_-1px_0_#e4e4e4,1px_2px_1px_#777]">
        <span className="text-[80px] font-thin [font-family:'Noto_Sans_CJK_SC',sans-serif]">莫西网</span>
        <span className="pt-2 text-[67px] [font-family:'Liberation_Mono',monospace]">www.3dmox.com</span>
      </div>
      <svg className="absolute top-[14px] right-[73px]" width="29" height="23" viewBox="0 0 29 23" fill="none" stroke="#d9e8d2" strokeWidth="6"><path d="M3 11L11 18L26 3" /></svg>
      <svg className="absolute top-[43px] right-[33px]" width="24" height="24" viewBox="0 0 24 24" fill="none" stroke="#f1c6c1" strokeWidth="7" strokeLinecap="round"><path d="M4.500 4.500L19.500 19.500M19.500 4.500L4.500 19.500" /></svg>
      <TaskPane />
      <div className="absolute bottom-0 left-3 text-[13px] leading-[22px] font-bold text-[#111]">*Front</div>
    </main>
  );
}

/* ---------- bottom bars ---------- */

function Bottom() {
  const t = "flex items-center justify-center whitespace-nowrap border-r border-gray-500 bg-[#d3d3d3] ";
  return (
    <footer className="shrink-0 bg-[#f7f7f7] whitespace-nowrap text-[#111]">
      <div className="flex h-4 border-b border-gray-400">
        <div className="ml-0.5 flex w-[65px] items-center justify-around border border-gray-500 bg-[#b0b0b0] text-[#858585]">
          {["M2 1V9M9 1L4 5L9 9Z", "M8 1L3 5L8 9Z", "M2 1L7 5L2 9Z", "M8 1V9M1 1L6 5L1 9Z"].map((d, i) => (
            <button key={d} aria-label={["First", "Previous", "Next", "Last"][i]}><svg width="9" height="9" viewBox="0 0 10 10" fill="currentColor" stroke="currentColor"><path d={d} /></svg></button>
          ))}
        </div>
        <button className={t + "w-[57px] pl-2"}>Model</button>
        <button className={t + "w-[68px]"}>3D Views</button>
        <button className={t + "w-[101px]"}>Motion Study 1</button>
        <button className="flex w-[128px] items-center gap-1.5 bg-[#f7f7f7] pl-1 font-bold">
          <Ico s={13}><path d="M2 1V18H19" stroke="#444" strokeWidth="2" /><path d="M3 17C6 10 10 5 18 3" stroke="#4a9a8a" strokeWidth="2" /></Ico>NL_Disp_Control
        </button>
        <div className="mr-px flex-1 border-t border-r border-l border-gray-500" />
      </div>
      <div className="flex h-[18px] items-center pl-px">
        <span className="flex-1">SOLIDWORKS Premium 2019 SP3.0</span>
        <span className="w-[82px] border-r border-[#ccc]">Under Defined</span>
        <span className="ml-2 w-[102px] border-r border-l border-[#ccc] pl-1">Editing Assembly</span>
        <span className="h-3.5 w-[17px] border-r border-[#ccc]" />
        <button className="flex w-[156px] items-center pl-7 text-[#aaa]">Custom<Caret className="ml-[18px] rotate-180 text-[#888]" /></button>
        <Ico s={17} className="mr-1"><path d="M1 7L8 2L18 8L13 18L3 12Z" fill="#ddd" stroke="#444" /><path d="M4 8L9 5L14 8L10 12ZM3 12L13 18" stroke="#444" /></Ico>
      </div>
      <div className="h-0.5 bg-[#3a3a3a]" />
    </footer>
  );
}

export default function App() {
  return (
    <div className="flex h-screen flex-col overflow-hidden bg-white text-[11px] leading-4 [font-family:'Noto_Sans',sans-serif]">
      <TitleBar />
      <Ribbon />
      <TabRow />
      <div className="flex min-h-0 flex-1">
        <Panel />
        <Viewport />
      </div>
      <Bottom />
    </div>
  );
}
